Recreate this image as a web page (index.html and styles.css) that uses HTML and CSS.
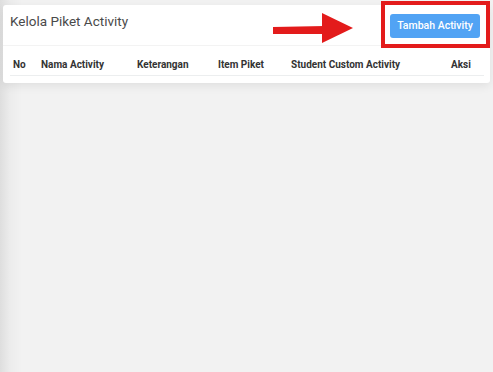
FILE: index.html
```html
<!DOCTYPE html>
<html lang="en">
  <head>
    <meta charset="UTF-8">
    <meta name="viewport" content="width=device-width, initial-scale=1.0">
    <title>Kelola Piket Activity</title>
    <link rel="stylesheet" href="styles.css">
  </head>
  <body>
    <div class="card">
      <div class="card-header">
        <h1>Kelola Piket Activity</h1>
        <button type="button" class="btn-primary">Tambah Activity</button>
      </div>
      <table class="activity-table">
        <thead>
          <tr>
            <th class="col-no">No</th>
            <th class="col-nama">Nama Activity</th>
            <th class="col-ket">Keterangan</th>
            <th class="col-item">Item Piket</th>
            <th class="col-student">Student Custom Activity</th>
            <th class="col-aksi">Aksi</th>
          </tr>
        </thead>
        <tbody></tbody>
      </table>
    </div>

    <!-- annotation overlay -->
    <svg class="note-arrow" width="84" height="34" viewBox="0 0 84 34">
      <polygon points="0,14 52,13 52,21 0,21" fill="#e31b1b"/>
      <polygon points="49,0 80,15 49,30" fill="#e31b1b"/>
    </svg>
    <div class="note-box"></div>
  </body>
</html>
```

FILE: styles.css
```css
:root {
  --text-color: #4a4a4a;
  --head-color: #333;
  --line-color: #eceeef;
  --blue: #51a3f4;
  --red: #e31b1b;
}

body {
  margin: 0;
  min-height: 372px;
  font-family: Roboto, 'Liberation Sans', sans-serif;
  color: var(--text-color);
  background: linear-gradient(to right, #dedede 0, #ececec 10px, #f2f2f2 22px);
  padding-top: 5px;
  box-sizing: border-box;
  position: relative;
}

.card {
  margin: 0 3px;
  background: #fff;
  border-radius: 3px;
  padding: 0 6px 7px 7px;
  box-shadow: 0 3px 10px rgba(0, 0, 0, 0.08);
}

.card-header {
  display: flex;
  justify-content: space-between;
  align-items: center;
  height: 40px;
  margin: 0 -6px 0 -7px;
  padding: 0 10px 0 7px;
  border-bottom: 1px solid #f3f3f3;
}

h1 {
  align-self: flex-start;
  margin: 0;
  padding-top: 6px;
  font-size: 13.5px;
  font-weight: 400;
  line-height: 20px;
  color: var(--text-color);
}

.btn-primary {
  height: 24px;
  width: 90px;
  margin-top: 1px;
  padding: 0;
  font-family: inherit;
  font-size: 10.5px;
  font-weight: 500;
  color: #fff;
  background: var(--blue);
  border: none;
  border-radius: 3px;
}

.activity-table {
  width: 474px;
  margin-top: 9px;
  border-collapse: collapse;
  table-layout: fixed;
}

.activity-table th {
  padding: 4px 3px;
  font-size: 10px;
  font-weight: 700;
  line-height: 12px;
  text-align: left;
  color: var(--head-color);
  border-bottom: 1px solid var(--line-color);
  white-space: nowrap;
}

.col-no { width: 22px; }
.col-nama { width: 90px; }
.col-ket { width: 75px; }
.col-item { width: 67px; }
.col-student { width: 154px; }
.col-aksi { width: 30px; }

.note-arrow {
  position: absolute;
  left: 273px;
  top: 13px;
}

.note-box {
  position: absolute;
  left: 381px;
  top: 1px;
  width: 101px;
  height: 39px;
  border: 4px solid var(--red);
}
```
